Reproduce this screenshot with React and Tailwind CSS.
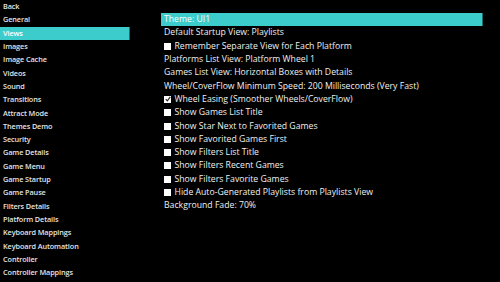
const menu = [
  'Back', 'General', 'Views', 'Images', 'Image Cache', 'Videos', 'Sound', 'Transitions',
  'Attract Mode', 'Themes Demo', 'Security', 'Game Details', 'Game Menu', 'Game Startup',
  'Game Pause', 'Filters Details', 'Platform Details', 'Keyboard Mappings',
  'Keyboard Automation', 'Controller', 'Controller Mappings',
]

const settings = [
  { label: 'Theme: UI1', selected: true },
  { label: 'Default Startup View: Playlists' },
  { label: 'Remember Separate View for Each Platform', check: false },
  { label: 'Platforms List View: Platform Wheel 1' },
  { label: 'Games List View: Horizontal Boxes with Details' },
  { label: 'Wheel/CoverFlow Minimum Speed: 200 Milliseconds (Very Fast)' },
  { label: 'Wheel Easing (Smoother Wheels/CoverFlow)', check: true },
  { label: 'Show Games List Title', check: false },
  { label: 'Show Star Next to Favorited Games', check: false },
  { label: 'Show Favorited Games First', check: false },
  { label: 'Show Filters List Title', check: false },
  { label: 'Show Filters Recent Games', check: false },
  { label: 'Show Filters Favorite Games', check: false },
  { label: 'Hide Auto-Generated Playlists from Playlists View', check: false },
  { label: 'Background Fade: 70%' },
]

function Box({ checked }) {
  return (
    <span className="w-[7px] h-[7px] bg-white flex items-center justify-center shrink-0 mr-[3.5px]">
      {checked && (
        <svg width="6" height="6" viewBox="0 0 6 6">
          <path d="M0.8 3.2 L2.3 4.8 L5.3 0.9" fill="none" stroke="#222" strokeWidth="1.1" />
        </svg>
      )}
    </span>
  )
}

export default function App() {
  return (
    <div className="w-[500px] h-[282px] bg-black flex overflow-hidden" style={{ fontFamily: '"Open Sans", sans-serif' }}>
      <div className="w-[130px] flex flex-col text-[7.3px] font-semibold tracking-[-0.1px]">
        {menu.map((m) => (
          <div
            key={m}
            className={`h-[13.3px] flex items-center pl-[3px] ${m === 'Views' ? 'bg-[#3ccccc] text-white border-r border-[#1d6f6f]' : 'text-[#e4e4e4]'}`}
          >
            {m}
          </div>
        ))}
      </div>
      <div className="ml-[31px] w-[322px] pt-[13px] flex flex-col text-[8.7px]">
        {settings.map((s) => (
          <div
            key={s.label}
            className={`h-[13.3px] flex items-center pl-[3px] ${s.selected ? 'bg-[#3ccccc] text-white border-r border-[#1d6f6f]' : 'text-[#f0f0f0]'}`}
          >
            {s.check !== undefined && <Box checked={s.check} />}
            {s.label}
          </div>
        ))}
      </div>
    </div>
  )
}
